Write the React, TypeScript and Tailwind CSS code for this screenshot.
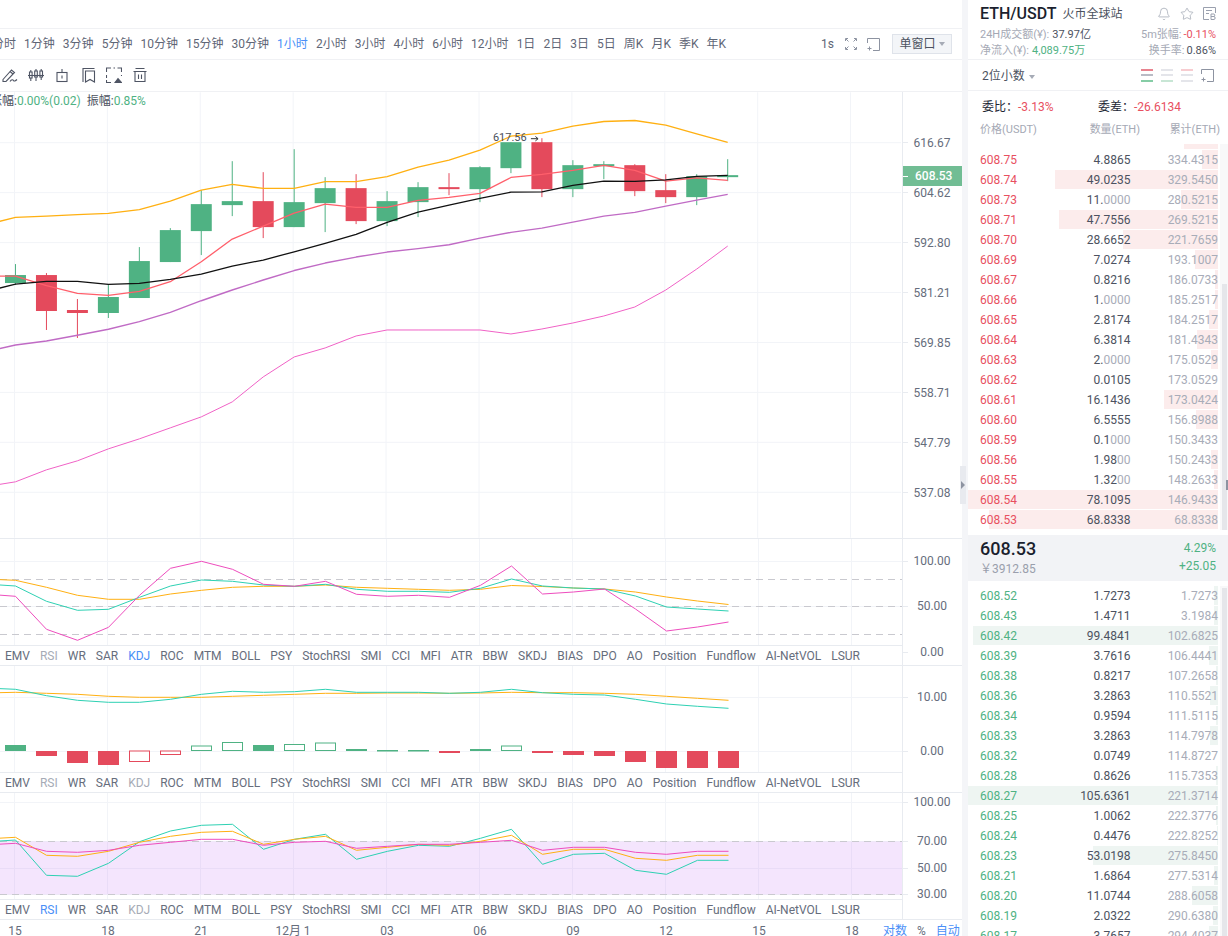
import React from "react";
import { Bell, Star } from "lucide-react";

const X = (i: number) => 15.5 + 31 * i;
const pts = (ys: number[]) => ys.map((y, k) => `${X(k - 1)},${y}`).join(" ");

type C = [number, number, number, number, "g" | "r"];
const candles: C[] = [
  [275, 283, 264, 285, "g"], [275, 311, 273, 330, "r"], [310, 313, 299, 338, "r"], [297, 313, 285, 318, "g"],
  [261, 298, 247, 298, "g"], [230, 262, 228, 262, "g"], [204, 231, 190, 255, "g"], [201, 205, 161, 216, "g"],
  [201, 227, 172, 238, "r"], [202, 227, 149, 227, "g"], [188, 203, 177, 232, "g"], [188, 221, 174, 224, "r"],
  [201, 221, 191, 226, "g"], [187, 202, 182, 217, "g"], [187, 189, 173, 195, "r"], [167, 189, 166, 202, "g"],
  [142, 168, 142, 173, "g"], [142, 189, 138, 197, "r"], [165, 189, 160, 197, "g"], [164, 166, 161, 179, "g"],
  [165, 191, 164, 196, "r"], [190, 197, 174, 203, "r"], [176, 197, 174, 205, "g"], [175, 177, 159, 181, "g"],
];
const GREEN = "#4fb283";
const RED = "#e44a5c";
const YEL = "#ffb012";
const TEAL = "#2ed1b3";
const PINK = "#ee4dbe";

const mYel = [225, 217.3, 216, 214.5, 213.3, 209.5, 201, 190, 184.3, 188.3, 188.3, 181.5, 181.5, 176.5, 167, 160, 150, 136, 133, 126, 121.3, 120.3, 125, 133.7, 142.3];
const mBlk = [292, 284, 281.3, 281.3, 284.3, 283.3, 279.3, 274, 266, 260, 251.7, 243.3, 234.3, 222.3, 212, 205, 198.3, 192, 191.7, 185.3, 181, 181.3, 179.7, 176.3, 175.3];
const mRed = [276, 276, 285.7, 293.3, 295.3, 291.3, 281.7, 261.7, 239, 226, 213, 204, 207.3, 207.3, 200.3, 197.3, 193.3, 177.3, 174.3, 170.3, 165.3, 170.3, 181, 177.7, 180.3];
const mPur = [352, 345, 341, 335.3, 329.3, 321.7, 312.3, 300.7, 290, 280, 270.5, 263, 257, 252, 248.5, 244.7, 238, 232.3, 228, 222, 216, 212.3, 206, 200, 194.3];
const mPnk = [487, 482, 470, 461, 449, 439, 428, 417, 402, 377, 357, 348, 336, 330, 330, 330, 330, 334, 329, 323, 316, 307, 290, 269, 246];

const kD = [579, 580.3, 587.3, 595.3, 599.3, 599.3, 594, 590.3, 587.3, 586.3, 586.3, 585, 587.3, 588.3, 589.3, 590.3, 589.3, 585.5, 586.5, 588, 589, 592, 597, 601, 604.5];
const kK = [584, 586, 601.3, 610.3, 609.3, 597.3, 586, 580, 581.3, 585, 586.3, 584.3, 589.3, 591.3, 591.3, 592.3, 588.3, 579, 586, 588, 589, 596, 607, 609, 611];
const kJ = [594, 596.3, 629.3, 640.3, 627.3, 595.3, 568.3, 561.3, 569.3, 584.3, 586.3, 581.3, 594.3, 596.3, 595.3, 597.3, 585.3, 566, 594, 592, 589, 609, 631, 627, 622];

const dT = [688, 689.3, 695.7, 700.3, 702.3, 702.3, 699.3, 694.3, 691.3, 692.3, 691.7, 689.3, 692.3, 692.3, 692.3, 693.3, 692.3, 689.3, 692.7, 694.3, 695, 699.3, 704, 706.3, 708.3];
const dY = [693, 692.3, 693.3, 694.3, 696.3, 697.3, 697.3, 697.3, 696.3, 695.3, 694.3, 693.3, 693.3, 693, 693, 693.3, 693, 692.3, 692.7, 692.7, 693.3, 694.3, 696.3, 698.3, 700.3];
type B = [number, number, "g" | "r", boolean];
const bars: B[] = [
  [745, 751, "g", true], [751, 756, "r", true], [751, 763, "r", true], [751, 765, "r", true],
  [751, 761.5, "r", false], [751, 754.5, "r", false], [746, 750.5, "g", false], [742.5, 750.5, "g", false],
  [745, 751, "g", true], [744.5, 750.5, "g", false], [743, 750.5, "g", false], [749, 751, "g", true],
  [750, 751.5, "g", true], [750, 751.5, "g", true], [751, 753, "r", true], [749, 751, "g", true],
  [746, 750.5, "g", false], [751, 753, "r", true], [751, 755, "r", true], [751, 756, "r", true],
  [751, 762, "r", true], [751, 768, "r", true], [751, 768, "r", true], [751, 768, "r", true],
];

const rT = [842, 840, 875.3, 876.3, 863.3, 841.7, 831, 825.3, 824.3, 849.3, 839.3, 834.3, 859.3, 851.3, 845.3, 846.3, 838.3, 829.3, 864.3, 854.3, 853.3, 870.3, 874.3, 860.3, 860.3];
const rY = [839, 837.3, 855.3, 856.3, 851.3, 842.3, 836.3, 832.3, 831.3, 844.3, 839.3, 836.3, 850.3, 847.3, 844.3, 845.3, 841.3, 835.3, 854.3, 849.3, 849.3, 858.3, 860.3, 855.3, 855.3];
const rP = [845, 843.3, 851.3, 852.3, 850.3, 845.3, 842.3, 839.3, 839.3, 845.3, 842.3, 841.3, 848.3, 846.3, 844.3, 844.3, 842.3, 840.3, 850.3, 847.3, 847.3, 852.3, 854.3, 851.3, 851.3];

const vGrid = [14.5, 107.5, 200.5, 293.5, 386.5, 479.5, 572.5, 665.5, 758.5, 851.5];

function Grid({ y0, y1, hs }: { y0: number; y1: number; hs: number[] }) {
  return (
    <g stroke="#f2f4f8" strokeWidth={1}>
      {vGrid.map((x) => <line key={x} x1={x} x2={x} y1={y0} y2={y1} />)}
      {hs.map((y) => <line key={y} x1={0} x2={902} y1={y} y2={y} />)}
    </g>
  );
}

function Line({ ys, color, w = 1 }: { ys: number[]; color: string; w?: number }) {
  return <polyline points={pts(ys)} fill="none" stroke={color} strokeWidth={w} strokeLinejoin="round" />;
}

function Axis({ y0, h, labels, dy = 4 }: { y0: number; h: number; labels: [string, number][]; dy?: number }) {
  return (
    <svg width={59} height={h} viewBox={`903 ${y0} 59 ${h}`} className="block shrink-0">
      {labels.map(([t, y]) => (
        <g key={t}>
          <line x1={903} x2={908} y1={Math.floor(y) + 0.5} y2={Math.floor(y) + 0.5} stroke="#e8ebf0" />
          <text x={932} y={y + dy} textAnchor="middle" className="text-[12px] fill-[#666d7c]">{t}</text>
        </g>
      ))}
    </svg>
  );
}

const tabNames = ["EMV", "RSI", "WR", "SAR", "KDJ", "ROC", "MTM", "BOLL", "PSY", "StochRSI", "SMI", "CCI", "MFI", "ATR", "BBW", "SKDJ", "BIAS", "DPO", "AO", "Position", "Fundflow", "AI-NetVOL", "LSUR"];

function Tabs({ on }: { on: string[] }) {
  return (
    <div className="flex h-[20px] shrink-0 items-center gap-[10px] border-t border-[#e8ebf0] pl-[5px] text-[12px] text-[#666d7c]">
      {tabNames.map((t) => {
        const dim = t === "RSI" || t === "KDJ";
        const active = on.includes(t);
        return (
          <span key={t} className={active ? "text-[#4a8ff7]" : dim ? "text-[#a6abb6]" : ""}>{t}</span>
        );
      })}
    </div>
  );
}

function Pane({ y0, h, axis, tabs, hs, children }: { y0: number; h: number; axis: [string, number][]; tabs: string[]; hs: number[]; children: React.ReactNode }) {
  return (
    <div className="flex h-[127px] shrink-0 border-b border-[#e8ebf0]">
      <div className="flex w-[903px] shrink-0 flex-col border-r border-[#e8ebf0]">
        <svg width={902} height={h} viewBox={`0 ${y0} 902 ${h}`} className="block shrink-0">
          <Grid y0={y0} y1={y0 + h} hs={hs} />
          {children}
        </svg>
        <Tabs on={tabs} />
      </div>
      <Axis y0={y0} h={126} labels={axis} />
    </div>
  );
}

const ICON = "#4f5564";
const ToolIcon = ({ children }: { children: React.ReactNode }) => (
  <svg width={16} height={16} viewBox="0 0 16 16" fill="none" stroke={ICON} strokeWidth={1.1} className="block shrink-0">{children}</svg>
);

const frames = ["分时", "1分钟", "3分钟", "5分钟", "10分钟", "15分钟", "30分钟", "1小时", "2小时", "3小时", "4小时", "6小时", "12小时", "1日", "2日", "3日", "5日", "周K", "月K", "季K", "年K"];

type Row = [string, string, string, number];
const asks: Row[] = [
  ["608.75", "4.8865", "334.4315", 16], ["608.74", "49.0235", "329.5450", 163], ["608.73", "11.0000", "280.5215", 37],
  ["608.71", "47.7556", "269.5215", 159], ["608.70", "28.6652", "221.7659", 95], ["608.69", "7.0274", "193.1007", 23],
  ["608.67", "0.8216", "186.0733", 3], ["608.66", "1.0000", "185.2517", 3], ["608.65", "2.8174", "184.2517", 9],
  ["608.64", "6.3814", "181.4343", 21], ["608.63", "2.0000", "175.0529", 7], ["608.62", "0.0105", "173.0529", 0],
  ["608.61", "16.1436", "173.0424", 54], ["608.60", "6.5555", "156.8988", 22], ["608.59", "0.1000", "150.3433", 0],
  ["608.56", "1.9800", "150.2433", 7], ["608.55", "1.3200", "148.2633", 4], ["608.54", "78.1095", "146.9433", 250],
  ["608.53", "68.8338", "68.8338", 229],
];
const bids: Row[] = [
  ["608.52", "1.7273", "1.7273", 4], ["608.43", "1.4711", "3.1984", 4], ["608.42", "99.4841", "102.6825", 245],
  ["608.39", "3.7616", "106.4441", 9], ["608.38", "0.8217", "107.2658", 2], ["608.36", "3.2863", "110.5521", 8],
  ["608.34", "0.9594", "111.5115", 2], ["608.33", "3.2863", "114.7978", 8], ["608.32", "0.0749", "114.8727", 0],
  ["608.28", "0.8626", "115.7353", 2], ["608.27", "105.6361", "221.3714", 250], ["608.25", "1.0062", "222.3776", 2],
  ["608.24", "0.4476", "222.8252", 1], ["608.23", "53.0198", "275.8450", 125], ["608.21", "1.6864", "277.5314", 4],
  ["608.20", "11.0744", "288.6058", 26], ["608.19", "2.0322", "290.6380", 5], ["608.17", "3.7657", "294.4037", 9],
];

function Qty({ v }: { v: string }) {
  const m = v.match(/^(.*?)(0+)$/);
  if (!m) return <span>{v}</span>;
  return <span>{m[1]}<span className="text-[#a8acb8]">{m[2]}</span></span>;
}

function BookRow({ r, ask }: { r: Row; ask: boolean }) {
  return (
    <div className="relative flex h-[20px] w-[250px] shrink-0 items-center pb-px pl-[12px] text-[12px]">
      <div
        className={`absolute right-0 top-0 h-[19px] ${ask ? "bg-[#fcecec]" : "bg-[#eef5f2]"}`}
        style={{ width: r[3] }}
      />
      <span className={`relative ${ask ? "text-[#e8505f]" : "text-[#4fb283]"}`}>{r[0]}</span>
      <span className="relative ml-auto w-[70px] text-right text-[#4c5260]"><Qty v={r[1]} /></span>
      <span className="relative w-[87.5px] text-right text-[#a8acb8]">{r[2]}</span>
    </div>
  );
}

function Stack({ c }: { c: [string, string, string] }) {
  return (
    <div className="flex w-[12px] flex-col gap-[3.5px]">
      {c.map((x, i) => <div key={i} className="h-[2px]" style={{ background: x }} />)}
    </div>
  );
}

function AddWin({ stroke = "#8d93a1" }: { stroke?: string }) {
  return (
    <svg width={13} height={13} viewBox="0 0 13 13" fill="none" stroke={stroke} strokeWidth={1} className="block shrink-0">
      <path d="M0.5 5V0.5H12.5V12.5H6" />
      <path d="M0.5 10.5H4.5M2.5 8.5V12.5" />
    </svg>
  );
}

export default function App() {
  return (
    <div className="relative flex h-[936px] w-[1228px] overflow-hidden bg-[#f4f5f8] [font-family:Roboto,'Noto_Sans_CJK_SC',sans-serif]">
      {/* Left: chart column */}
      <div className="flex h-[936px] w-[962px] shrink-0 flex-col overflow-hidden bg-white">
        <div className="h-[29px] shrink-0 border-b border-[#f0f1f4]" />
        <div className="flex h-[31px] shrink-0 items-center border-b border-[#f0f1f4] pr-[10px] text-[12px] text-[#5f6676]">
          <div className="-ml-[8px] flex gap-[8.05px]">
            {frames.map((f) => (
              <span key={f} className={f === "1小时" ? "text-[#4a8ff7]" : ""}>{f}</span>
            ))}
          </div>
          <div className="ml-auto flex items-center">
            <span>1s</span>
            <svg width={12} height={12} viewBox="0 0 12 12" fill="none" stroke="#8d93a1" strokeWidth={1} className="ml-[11px] block">
              <path d="M0.5 3V0.5H3M9 0.5H11.5V3M11.5 9V11.5H9M3 11.5H0.5V9M1 1L3.5 3.5M11 1L8.5 3.5M11 11L8.5 8.5M1 11L3.5 8.5" />
            </svg>
            <div className="ml-[10px]"><AddWin /></div>
            <div className="ml-[12px] flex h-[20px] w-[60px] items-center justify-center gap-[3px] border border-[#dfe3ea] bg-[#f3f5f8] text-[#4c5260]">
              单窗口
              <span className="h-0 w-0 border-x-[3.5px] border-t-[4px] border-x-transparent border-t-[#a6abb6]" />
            </div>
          </div>
        </div>
        <div className="flex h-[32px] shrink-0 items-center gap-[10px] border-b border-[#f0f1f4] pb-[2px] pl-[2px]">
          <ToolIcon>
            <path d="M1 12.5L9.5 3L12.5 5.5L4 14.5L1 14.5Z" /><path d="M8 4.5L11 7" /><path d="M8 14.5C9.5 12 11 12.5 11.5 13.5C12 14.5 13.5 14 15 12.5" />
          </ToolIcon>
          <ToolIcon>
            <path d="M0 8.5H16" /><rect x="1.5" y="5" width="2.6" height="6" /><rect x="6.7" y="4" width="2.6" height="6" /><rect x="11.9" y="4" width="2.6" height="6" />
            <path d="M2.8 3V5M2.8 11V14M8 2V4M8 10V14M13.2 2V4M13.2 10V13" />
          </ToolIcon>
          <ToolIcon>
            <rect x="3" y="5.5" width="10" height="9" /><path d="M8 2V5.5M8 8.5V11.5" />
          </ToolIcon>
          <ToolIcon>
            <path d="M3 15V1.5H14.5" /><path d="M5.5 4H14.5V15L10 12.5L5.5 15Z" />
          </ToolIcon>
          <ToolIcon>
            <path d="M0.5 5V1H5M7.5 1H9M11.5 1H15.5V5M15.5 8V9M0.5 8V11M0.5 13V15.5H5" />
            <path d="M9 15.5L12 11.5L15.5 15.5Z" fill={ICON} />
          </ToolIcon>
          <ToolIcon>
            <path d="M1.5 4.5H14.5M3.5 1.5H12.5M3 4.5V14.5H13V4.5M6.5 7.5V12M9.5 7.5V12" />
          </ToolIcon>
        </div>

        {/* main pane */}
        <div className="relative flex h-[447px] shrink-0 border-b border-[#e8ebf0]">
          <div className="absolute left-[-10px] top-[1px] whitespace-pre text-[12px] leading-[16px] text-[#4c5260]">
            涨幅:<span className="text-[#4fb283]">0.00%(0.02)</span>{"  "}振幅:<span className="text-[#4fb283]">0.85%</span>
          </div>
          <svg width={903} height={446} viewBox="0 92 903 446" className="block shrink-0 border-r border-[#e8ebf0]">
            <Grid y0={92} y1={538} hs={[142.5, 192.5, 242.5, 292.5, 342.5, 392.5, 442.5, 492.5]} />
            {candles.map(([t, b, wt, wb, c], i) => (
              <g key={i} fill={c === "g" ? GREEN : RED}>
                <rect x={X(i) - 0.5} y={wt} width={1} height={wb - wt} />
                <rect x={X(i) - 10.5} y={t} width={21} height={b - t} />
              </g>
            ))}
            <Line ys={mPnk} color="#f061c6" />
            <Line ys={mPur} color="#c06bc5" w={1.4} />
            <Line ys={mYel} color={YEL} w={1.3} />
            <Line ys={mRed} color="#ff5f6b" w={1.3} />
            <Line ys={mBlk} color="#111111" w={1.3} />
            <text x={493.5} y={141} className="text-[11px] fill-[#4a4f5c]">617.56</text>
            <path d="M531.5 138.5H538.5M536 136.3L538.7 138.5L536 140.7" fill="none" stroke="#333" strokeWidth={1} />
          </svg>
          <div className="relative">
            <Axis y0={92} h={446} dy={5} labels={[["616.67", 142], ["604.62", 192], ["592.80", 242], ["581.21", 292], ["569.85", 342], ["558.71", 392], ["547.79", 442], ["537.08", 492]]} />
            <div className="absolute left-0 top-[74px] flex h-[20px] w-[59px] items-center bg-[#71bd94] text-[12px] font-medium text-white">
              <span className="h-px w-[5px] bg-white" />
              <span className="ml-[7px]">608.53</span>
            </div>
          </div>
        </div>

        <Pane y0={539} h={106} tabs={["KDJ"]} hs={[561.5, 606.5]} axis={[["100.00", 561], ["50.00", 606], ["0.00", 652]]}>
          {[579.5, 606.5, 634.5].map((y) => <line key={y} x1={0} x2={902} y1={y} y2={y} stroke="#c9c9cf" strokeDasharray="7 5" />)}
          <Line ys={kD} color={YEL} />
          <Line ys={kK} color={TEAL} />
          <Line ys={kJ} color={PINK} />
        </Pane>

        <Pane y0={666} h={106} tabs={[]} hs={[697.5, 751.5]} axis={[["10.00", 697], ["0.00", 751]]}>
          {bars.map(([t, b, c, fill], i) => {
            const col = c === "g" ? GREEN : RED;
            return fill ? (
              <rect key={i} x={X(i) - 10.5} y={t} width={21} height={b - t} fill={col} />
            ) : (
              <rect key={i} x={X(i) - 10} y={t} width={20} height={b - t} fill="#fff" stroke={col} strokeWidth={1} />
            );
          })}
          <Line ys={dY} color={YEL} />
          <Line ys={dT} color={TEAL} />
        </Pane>

        <Pane y0={793} h={106} tabs={["RSI"]} hs={[802.5, 841.5, 868.5, 894.5]} axis={[["100.00", 802], ["70.00", 841], ["50.00", 868], ["30.00", 894]]}>
          <rect x={0} y={841.5} width={902} height={53} fill="#c77bf5" fillOpacity={0.2} />
          {[841.5, 894.5].map((y) => <line key={y} x1={0} x2={902} y1={y} y2={y} stroke="#c9c9cf" strokeDasharray="7 5" />)}
          <Line ys={rT} color={TEAL} />
          <Line ys={rY} color={YEL} />
          <Line ys={rP} color={PINK} />
        </Pane>

        <div className="flex h-[16px] shrink-0 overflow-hidden">
          <svg width={880} height={16} viewBox="0 920 880 16" className="block shrink-0">
            {[["15", 15], ["18", 108], ["21", 201], ["12月 1", 293], ["03", 387], ["06", 480], ["09", 573], ["12", 666], ["15", 759], ["18", 852]].map(([t, x]) => (
              <text key={String(x)} x={Number(x)} y={934.5} textAnchor="middle" className="text-[12px] fill-[#666d7c]">{t}</text>
            ))}
          </svg>
          <div className="flex gap-[10px] pl-[3px] pt-[3px] text-[12px] leading-[16px]">
            <span className="text-[#4a8ff7]">对数</span>
            <span className="text-[#666d7c]">%</span>
            <span className="text-[#4a8ff7]">自动</span>
          </div>
        </div>
      </div>

      {/* Right: order book */}
      <div className="ml-[6px] flex h-[936px] w-[260px] shrink-0 flex-col overflow-hidden bg-white">
        <div className="h-[60px] shrink-0 border-b border-[#f0f1f4] pl-[12px] pr-[12px]">
          <div className="flex h-[27px] items-center">
            <span className="text-[16px] font-medium text-[#1b1f2e]">ETH/USDT</span>
            <span className="ml-[6px] text-[12px] text-[#4c5260]">火币全球站</span>
            <div className="ml-auto flex items-center gap-[9px] text-[#9aa0ae]">
              <Bell size={14} strokeWidth={1.2} />
              <Star size={14} strokeWidth={1.2} />
              <svg width={13} height={13} viewBox="0 0 13 13" fill="none" stroke="#9aa0ae" strokeWidth={1} className="block">
                <path d="M12.5 6V0.5H0.5V12.5H6M3 3.5H9M3 6.5H6" />
                <path d="M8 7H11C12 7 12 9.5 11 9.5C12.5 9.5 12.5 12.5 11 12.5H8ZM8 9.5H11" />
              </svg>
            </div>
          </div>
          <div className="flex h-[16px] items-center text-[11px] text-[#a5a9b5]">
            <span>24H成交额(¥):</span><span className="ml-[3px] text-[#4c5260]">37.97亿</span>
            <span className="ml-auto">5m张幅:</span><span className="ml-[2px] text-[#e8505f]">-0.11%</span>
          </div>
          <div className="flex h-[16px] items-center text-[11px] text-[#a5a9b5]">
            <span>净流入(¥):</span><span className="ml-[3px] text-[#4fb283]">4,089.75万</span>
            <span className="ml-auto">换手率:</span><span className="ml-[2px] text-[#4c5260]">0.86%</span>
          </div>
        </div>
        <div className="flex h-[31px] shrink-0 items-center border-b border-[#f0f1f4] pl-[14px] pr-[14px] text-[12px] text-[#4c5260]">
          <span className="mt-[1px]">2位小数</span>
          <span className="ml-[4px] mt-[4px] h-0 w-0 border-x-[3px] border-t-[4px] border-x-transparent border-t-[#a6abb6]" />
          <div className="ml-auto flex items-center gap-[8px]">
            <Stack c={["#e8838f", "#b9bbc5", "#86cda6"]} />
            <Stack c={["#e4e5ea", "#e4e5ea", "#c8e6d5"]} />
            <Stack c={["#f7ccd0", "#e4e5ea", "#e4e5ea"]} />
            <AddWin />
          </div>
        </div>
        <div className="flex h-[30px] shrink-0 items-center pl-[14px] pt-[2px] text-[12px] text-[#222633]">
          <span className="w-[116px]">委比：<span className="text-[#e8505f]">-3.13%</span></span>
          <span>委差：<span className="text-[#e8505f]">-26.6134</span></span>
        </div>
        <div className="flex h-[23px] shrink-0 pl-[12px] pr-[8px] pt-[1px] text-[11px] leading-[16px] text-[#a5a9b5]">
          <span>价格(USDT)</span>
          <span className="ml-auto">数量(ETH)</span>
          <span className="w-[80px] text-right">累计(ETH)</span>
        </div>

        <div className="flex h-[386px] shrink-0 overflow-hidden">
          <div className="flex w-[250px] shrink-0 flex-col justify-end">
            <div className="mb-[1px] ml-auto h-[5px] w-[34px] shrink-0 bg-[#fcecec]" />
            {asks.map((r) => <BookRow key={r[0]} r={r} ask />)}
          </div>
          <div className="ml-[2px] w-[8px] bg-[#f8f8f9] pt-[140px]">
            <div className="ml-[2px] h-full w-[5px] bg-[#e5e6ea]" />
          </div>
        </div>

        <div className="h-[5px] shrink-0" />
        <div className="flex h-[46px] shrink-0 items-center bg-[#f2f3f6] pb-[3px] pl-[12px] pr-[12px]">
          <div className="flex flex-col">
            <span className="text-[18px] font-medium leading-[24px] text-[#1b1f2e]">608.53</span>
            <span className="text-[12px] leading-[16px] text-[#9a9fac]">￥3912.85</span>
          </div>
          <div className="ml-auto flex flex-col items-end text-[12px] leading-[18px] text-[#4fb283]">
            <span>4.29%</span>
            <span>+25.05</span>
          </div>
        </div>
        <div className="h-[5px] shrink-0" />

        <div className="flex min-h-0 flex-1 overflow-hidden">
          <div className="flex w-[250px] shrink-0 flex-col">
            {bids.map((r) => <BookRow key={r[0]} r={r} ask={false} />)}
          </div>
          <div className="ml-[2px] w-[8px] bg-[#f8f8f9] pt-[2px]">
            <div className="ml-[2px] h-full w-[5px] bg-[#e5e6ea]" />
          </div>
        </div>
      </div>

      {/* collapse handles over the gutter */}
      <div className="absolute left-[960px] top-[466px] flex h-[38px] w-[6px] items-center justify-center bg-[#e8eaef]">
        <span className="h-0 w-0 border-y-[4px] border-l-[4px] border-y-transparent border-l-[#8d93a1]" />
      </div>
      <div className="absolute right-0 top-[480px] h-[10px] w-[2px] bg-[#8d93a1]" />
    </div>
  );
}
